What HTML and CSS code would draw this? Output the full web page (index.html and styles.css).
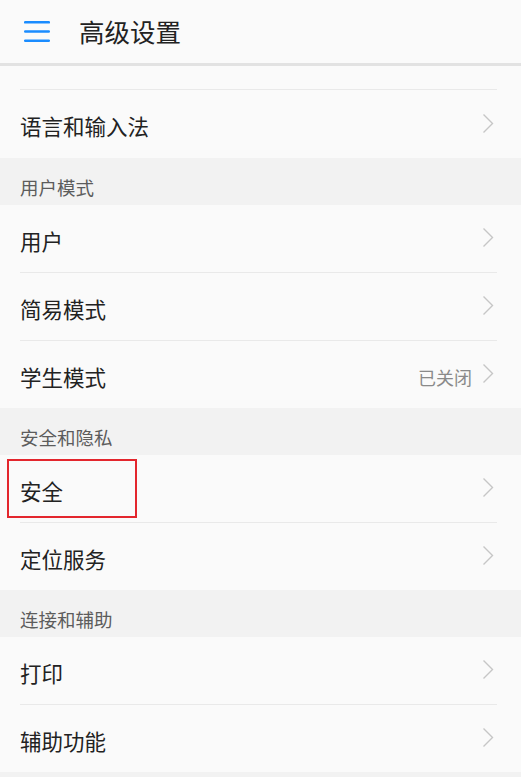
FILE: index.html
```html
<!DOCTYPE html>
<html lang="zh-CN">
<head>
<meta charset="utf-8">
<title>高级设置</title>
<link rel="stylesheet" href="styles.css">
</head>
<body>
<div class="app">
  <header class="topbar">
    <svg class="menu-icon" width="26" height="22" viewBox="0 0 26 22" aria-hidden="true">
      <rect x="0" y="1" width="26" height="2.6" rx="1.2" fill="#1a8cff"/>
      <rect x="0" y="10.2" width="26" height="2.6" rx="1.2" fill="#1a8cff"/>
      <rect x="0" y="19.4" width="26" height="2.6" rx="1.2" fill="#1a8cff"/>
    </svg>
    <h1 class="title">高级设置</h1>
  </header>

  <main class="content">
    <div class="group group-top">
      <div class="row row-divided row-first"><span class="label">语言和输入法</span><span class="chev"></span></div>
    </div>

    <div class="section">用户模式</div>
    <div class="group">
      <div class="row"><span class="label">用户</span><span class="chev"></span></div>
      <div class="row row-divided"><span class="label">简易模式</span><span class="chev"></span></div>
      <div class="row row-divided"><span class="label">学生模式</span><span class="value">已关闭</span><span class="chev"></span></div>
    </div>

    <div class="section">安全和隐私</div>
    <div class="group">
      <div class="row"><span class="label">安全</span><span class="chev"></span><span class="highlight"></span></div>
      <div class="row row-divided"><span class="label">定位服务</span><span class="chev"></span></div>
    </div>

    <div class="section">连接和辅助</div>
    <div class="group">
      <div class="row"><span class="label">打印</span><span class="chev"></span></div>
      <div class="row row-divided"><span class="label">辅助功能</span><span class="chev"></span></div>
    </div>
    <div class="section section-tail"></div>
  </main>
</div>
</body>
</html>
```

FILE: styles.css
```css
* { box-sizing: border-box; }

html, body {
  margin: 0;
  padding: 0;
  background: #ffffff;
}

body {
  font-family: "Noto Sans CJK SC", "Noto Sans", sans-serif;
  color: #222222;
}

.app {
  width: 521px;
  height: 777px;
  overflow: hidden;
  background: #fafafa;
}

.topbar {
  height: 66px;
  display: flex;
  align-items: center;
  padding-left: 24px;
  padding-bottom: 2px;
  background: #fafafa;
  border-bottom: 3px solid #e2e2e2;
}

.menu-icon {
  display: block;
  flex: none;
}

.title {
  margin: 0 0 0 29px;
  font-size: 25.5px;
  font-weight: 400;
  line-height: 1;
  color: #222222;
}

.content {
  display: flex;
  flex-direction: column;
}

.group {
  display: flex;
  flex-direction: column;
  background: #fafafa;
}

.group-top {
  padding-top: 23px;
}

.row {
  position: relative;
  height: 67px;
  margin: 0 24px 0 20px;
  display: flex;
  align-items: center;
  padding-top: 4px;
}

.row-divided {
  height: 68px;
  border-top: 1px solid #e9e9e9;
}

.row-first {
  height: 69px;
}

.label {
  flex: 1;
  font-size: 21.5px;
  line-height: 1;
  color: #222222;
}

.value {
  font-size: 18px;
  line-height: 1;
  color: #8a8a8a;
  margin-right: 10px;
}

.chev {
  width: 12px;
  height: 21px;
  margin-right: 3px;
  margin-top: -6px;
  background: no-repeat center / 12px 21px url("data:image/svg+xml;utf8,<svg xmlns='http://www.w3.org/2000/svg' width='12' height='21' viewBox='0 0 12 21'><polyline points='1.5,1.5 10.5,10.5 1.5,19.5' fill='none' stroke='%23c6c6c6' stroke-width='1.4'/></svg>");
}

.section {
  height: 47px;
  padding: 20px 0 0 20px;
  background: #f2f2f2;
  font-size: 18.5px;
  line-height: 1;
  color: #5c5c5c;
}

.section-tail {
  height: 10px;
  padding: 0;
}

.highlight {
  position: absolute;
  left: -13px;
  top: 4px;
  width: 130px;
  height: 59px;
  border: 2px solid #e3262d;
}
```
